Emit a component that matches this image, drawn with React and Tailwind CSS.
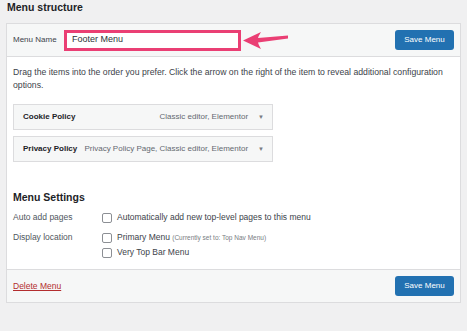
import React from 'react';

const items = [
  { title: 'Cookie Policy', meta: 'Classic editor, Elementor' },
  { title: 'Privacy Policy', meta: 'Privacy Policy Page, Classic editor, Elementor' },
];

const Checkbox = () => (
  <span className="inline-block w-[10px] h-[10px] rounded-[2px] border border-[#8c8f94] bg-white shrink-0" />
);

const SaveButton = () => (
  <button className="h-[20px] w-[59px] rounded-[3px] bg-[#2271b1] text-white text-[8px] leading-none">
    Save Menu
  </button>
);

const Arrow = () => (
  <svg width="47" height="20" viewBox="0 0 47 20" className="shrink-0 ml-[1px]">
    <path
      d="M1 10.5 L19 2 Q16.5 6 16 8 L46 5.5 L46 8.5 L16 12.5 Q16.5 15 19 19 Z"
      fill="#ea3f74"
    />
  </svg>
);

export default function App() {
  return (
    <div className="w-[467px] h-[331px] bg-[#f0f0f1] overflow-hidden font-['Liberation_Sans',Arial,sans-serif] text-[#3c434a]">
      <h2 className="pl-[7px] pt-[1px] h-[23px] text-[10.5px] font-bold leading-[13px] text-[#1d2327]">
        Menu structure
      </h2>
      <div className="ml-[6px] w-[455px] border border-[#dcdcde] bg-white">
        {/* header */}
        <div className="h-[33px] flex items-center bg-[#f6f7f7] border-b border-[#dcdcde] pl-[6px] pr-[6px]">
          <span className="text-[8px] w-[51px] shrink-0">Menu Name</span>
          <div className="w-[177px] h-[21px] border-[3px] border-[#ea3f74] bg-white flex items-center pl-[5px] text-[9px] text-[#2c3338] shrink-0">
            Footer Menu
          </div>
          <Arrow />
          <div className="flex-1" />
          <SaveButton />
        </div>

        {/* body */}
        <div className="px-[6px] pt-[9px] h-[212px]">
          <p className="text-[8.7px] leading-[13px] w-[440px]">
            Drag the items into the order you prefer. Click the arrow on the right of the item to reveal additional configuration options.
          </p>
          <div className="mt-[12px] flex flex-col gap-[6px] w-[260px]">
            {items.map((it) => (
              <div
                key={it.title}
                className="h-[26px] flex items-center border border-[#dcdcde] bg-[#f6f7f7] pl-[9px] pr-[8px]"
              >
                <span className="text-[8px] font-bold text-[#1d2327]">{it.title}</span>
                <span className="flex-1 text-right text-[8px] text-[#646970] pr-[10px]">{it.meta}</span>
                <span className="text-[6px] text-[#787c82]">▼</span>
              </div>
            ))}
          </div>
          <h3 className="mt-[29px] text-[10.5px] font-semibold text-[#1d2327] leading-[13px]">Menu Settings</h3>
          <div className="mt-[7px] h-[13px] flex items-center text-[8.5px]">
            <span className="w-[89px] text-[#50575e]">Auto add pages</span>
            <Checkbox />
            <span className="ml-[5px]">Automatically add new top-level pages to this menu</span>
          </div>
          <div className="mt-[7px] flex text-[8.5px]">
            <span className="w-[89px] h-[13px] flex items-center text-[#50575e]">Display location</span>
            <div className="flex flex-col gap-[2px]">
              <div className="h-[13px] flex items-center">
                <Checkbox />
                <span className="ml-[5px]">
                  Primary Menu <span className="text-[6.5px] text-[#787c82]">(Currently set to: Top Nav Menu)</span>
                </span>
              </div>
              <div className="h-[13px] flex items-center">
                <Checkbox />
                <span className="ml-[5px]">Very Top Bar Menu</span>
              </div>
            </div>
          </div>
        </div>

        {/* footer */}
        <div className="h-[33px] flex items-center justify-between bg-[#f6f7f7] border-t border-[#dcdcde] pl-[6px] pr-[6px]">
          <a className="text-[8.5px] text-[#b32d2e] underline">Delete Menu</a>
          <SaveButton />
        </div>
      </div>
    </div>
  );
}
